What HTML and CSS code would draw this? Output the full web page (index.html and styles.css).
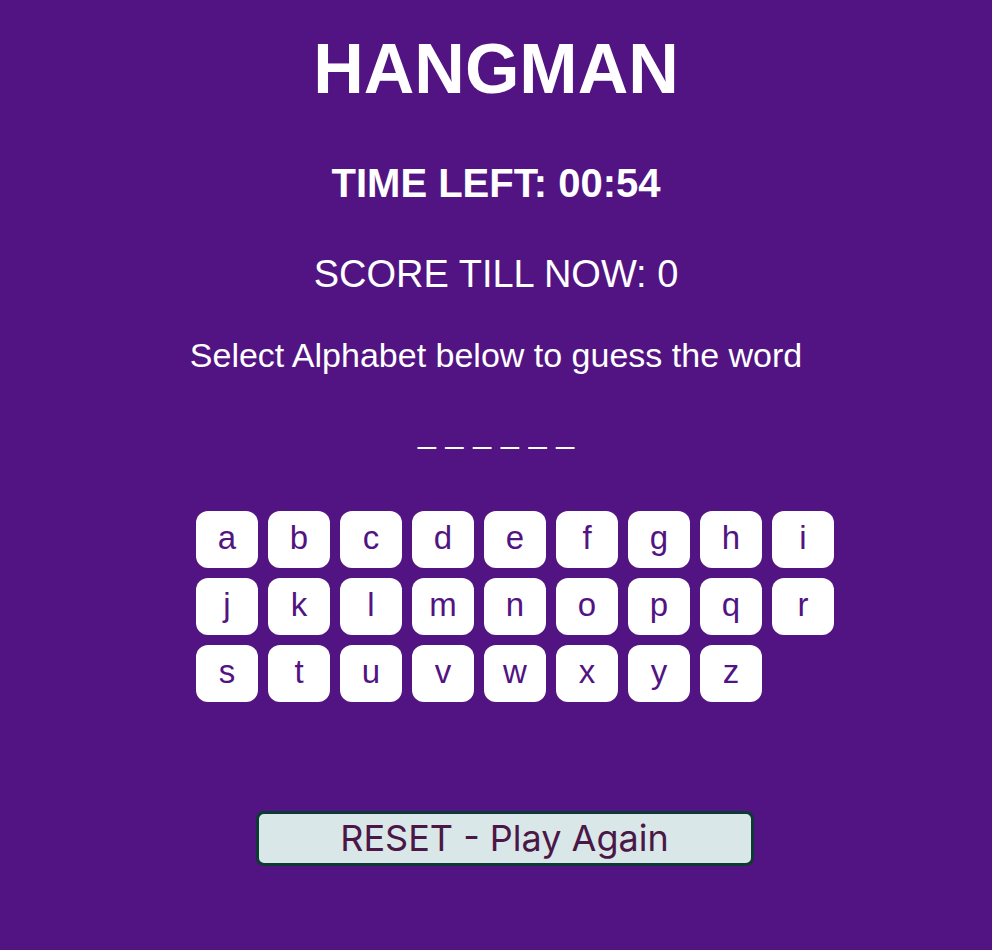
FILE: index.html
```html
<!DOCTYPE html>
<html lang="en">
<head>
<meta charset="utf-8">
<title>Hangman</title>
<link rel="stylesheet" href="styles.css">
</head>
<body>
<main class="game">
  <h1 class="title">HANGMAN</h1>
  <h2 class="timer">TIME LEFT: 00:54</h2>
  <p class="score">SCORE TILL NOW: 0</p>
  <p class="hint">Select Alphabet below to guess the word</p>
  <p class="word">_ _ _ _ _ _</p>
  <div class="keyboard">
    <button class="key">a</button><button class="key">b</button><button class="key">c</button><button class="key">d</button><button class="key">e</button><button class="key">f</button><button class="key">g</button><button class="key">h</button><button class="key">i</button>
    <button class="key">j</button><button class="key">k</button><button class="key">l</button><button class="key">m</button><button class="key">n</button><button class="key">o</button><button class="key">p</button><button class="key">q</button><button class="key">r</button>
    <button class="key">s</button><button class="key">t</button><button class="key">u</button><button class="key">v</button><button class="key">w</button><button class="key">x</button><button class="key">y</button><button class="key">z</button>
  </div>
  <div class="actions">
    <button class="reset">RESET - Play Again</button>
  </div>
</main>
</body>
</html>
```

FILE: styles.css
```css
html, body {
  margin: 0;
  padding: 0;
  background: #521482;
}

body {
  font-family: "Liberation Sans", Arial, Helvetica, sans-serif;
  color: #ffffff;
}

.game {
  display: flex;
  flex-direction: column;
  align-items: center;
  padding-top: 29px;
  text-align: center;
}

.title {
  margin: 0;
  font-size: 70px;
  line-height: 80px;
  font-weight: bold;
}

.timer {
  margin: 51px 0 0;
  font-size: 40px;
  line-height: 46px;
  font-weight: bold;
}

.score {
  margin: 46px 0 0;
  font-size: 38px;
  line-height: 44px;
  font-weight: normal;
}

.hint {
  margin: 39px 0 0;
  font-size: 34px;
  line-height: 40px;
}

.word {
  margin: 38px 0 0;
  font-size: 32px;
  line-height: 38px;
  white-space: pre;
  word-spacing: 1px;
}

.keyboard {
  margin-top: 60px;
  width: 650px;
  padding-left: 50px;
  display: grid;
  grid-template-columns: repeat(9, 62px);
  grid-auto-rows: 57px;
  column-gap: 10px;
  row-gap: 10px;
}

.key {
  margin: 0;
  padding: 0 0 3px;
  border: none;
  border-radius: 12px;
  background: #ffffff;
  color: #521482;
  font-family: "Liberation Sans", Arial, Helvetica, sans-serif;
  font-size: 33px;
  line-height: 54px;
  text-align: center;
}

.actions {
  margin-top: 109px;
  padding-left: 17px;
}

.reset {
  width: 498px;
  height: 55px;
  margin: 0;
  padding: 0;
  background: #d9e7e8;
  border: 3px solid #0c3a34;
  border-radius: 8px;
  color: #4a1747;
  font-family: Inter, "Liberation Sans", sans-serif;
  font-size: 36px;
  line-height: 49px;
}
```
